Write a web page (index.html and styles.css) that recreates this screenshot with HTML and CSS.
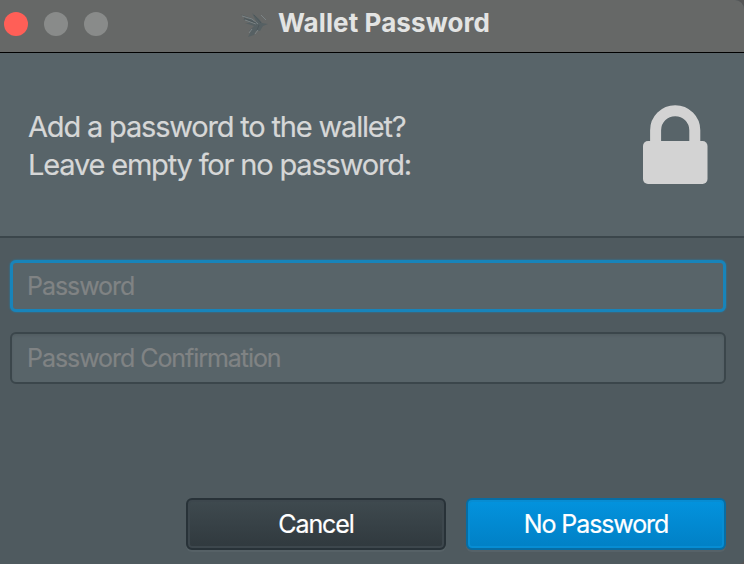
FILE: index.html
```
<!DOCTYPE html>
<html lang="en">
<head>
<meta charset="utf-8">
<title>Wallet Password</title>
<link rel="stylesheet" href="styles.css">
</head>
<body>
<main class="window">
  <div class="titlebar">
    <div class="lights"><span class="light close"></span><span class="light"></span><span class="light"></span></div>
    <svg class="bird" viewBox="0 0 30 26" aria-hidden="true">
      <path fill="#566063" d="M0 3l11 4 6 5-5-10 7 6 3 4 6 1-5 2-3 5-4 0-2 4-6 2 3-6-2 0 5-5-9-3 5 0-7-4 6 0z"/>
      <path fill="none" stroke="#7b8385" stroke-width="1" d="M2 5l10 3 6 5M5 9l11 4M21 4l5 5M18 19l-3 4M9 22l3-4"/>
      <path fill="none" stroke="#4d575b" stroke-width="1" d="M14 4l7 8M4 7l12 5M19 14l-2 5"/>
    </svg>
    <h1 class="title">Wallet Password</h1>
  </div>
  <header class="header">
    <p class="prompt">Add a password to the wallet?<br>Leave empty for no password:</p>
    <svg class="lock" viewBox="0 0 65 80" aria-hidden="true">
      <path fill="none" stroke="#d3d3d3" stroke-width="11" d="M12.6 40V25.3a19.6 19.6 0 0 1 39.2 0V40"/>
      <rect y="36" width="64.5" height="43" rx="5" fill="#d3d3d3"/>
    </svg>
  </header>
  <form class="form">
    <input class="field focused" type="password" placeholder="Password">
    <input class="field" type="password" placeholder="Password Confirmation">
    <div class="actions">
      <button class="button cancel" type="button">Cancel</button>
      <button class="button primary" type="button">No Password</button>
    </div>
  </form>
</main>
</body>
</html>
```
FILE: styles.css
```
* { box-sizing: border-box; }
html { background: #555; }
body { margin: 0; overflow: hidden; font-family: Inter, "Liberation Sans", sans-serif; }
.window { display: flex; flex-direction: column; width: 744px; height: 564px; background: #4f5a5f; border-radius: 0 9px 5px 0; overflow: hidden; }
.titlebar { display: flex; align-items: center; height: 53px; padding: 0 0 5px 4px; background: #666867; border-bottom: 1px solid #000; flex: none; }
.lights { display: flex; gap: 16px; width: 236px; }
.light { width: 24px; height: 24px; border-radius: 50%; background: #898b8a; }
.close { background: #ff5f57; }
.bird { width: 30px; height: 26px; margin-right: 8px; }
.title { margin: 0 0 2px; font-size: 26px; line-height: 32px; font-weight: 700; color: #e3e4e3; letter-spacing: .1px; white-space: nowrap; }
.header { display: flex; justify-content: space-between; height: 185px; flex: none; padding: 52px 36px 0 28px; background: #586469; border-bottom: 2px solid #3b464b; }
.prompt { margin: 3px 0 0; font-size: 29px; line-height: 38px; color: #d6d7d7; white-space: nowrap; letter-spacing: -1.18px; -webkit-text-stroke: .2px #d6d7d7; }
.lock { width: 65px; height: 80px; }
.form { display: flex; flex-direction: column; flex: 1; padding: 22px 18px 14px 10px; }
.field { width: 716px; height: 52px; margin: 0 0 20px; padding: 0 15px; border: 2px solid #3b464b; border-radius: 6px; background: #586469; font: 25px Inter, "Liberation Sans", sans-serif; letter-spacing: -1.06px; outline: none; box-shadow: inset 0 2px 2px #535e63; }
.field::placeholder { color: #808384; opacity: 1; -webkit-text-stroke: .2px #808384; }
.focused { border: 3px solid #1884ba; padding: 0 14px; box-shadow: 0 0 2px #1884ba; }
.actions { display: flex; justify-content: flex-end; gap: 20px; margin-top: auto; }
.button { width: 260px; height: 52px; padding: 0; border: 2px solid #283238; border-radius: 6px; color: #fff; font: 25px Inter, "Liberation Sans", sans-serif; letter-spacing: -1.1px; -webkit-text-stroke: .2px #fff; }
.cancel { background: linear-gradient(#3f4a4f, #30393e); box-shadow: inset 0 0 0 2px #3d474d, 0 2px 0 #566166; }
.primary { border-color: #076da4; background: linear-gradient(#0393de, #0180c5); box-shadow: inset 0 0 0 2px #078dd3, 0 2px 0 #566268; }
```
